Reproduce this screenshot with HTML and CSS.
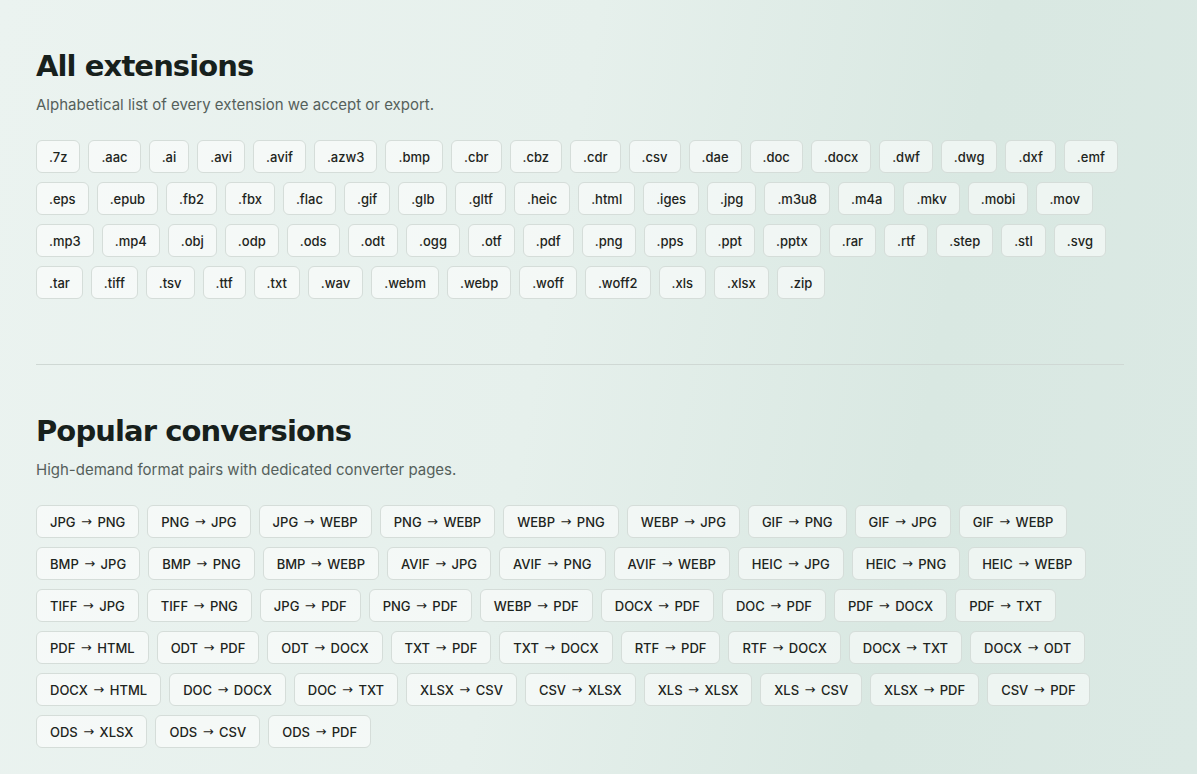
FILE: index.html
```html
<!DOCTYPE html>
<html lang="en">
<head>
    <meta charset="UTF-8">
    <meta name="viewport" content="width=device-width, initial-scale=1.0">
    <title>Formats - All extensions</title>
    <link rel="stylesheet" href="styles.css">
</head>
<body>
    <div class="page">
        <section class="section">
            <h2 class="section-title">All extensions</h2>
            <p class="section-desc">Alphabetical list of every extension we accept or export.</p>
            <div class="chip-list">
                <a class="chip">.7z</a><a class="chip">.aac</a><a class="chip">.ai</a><a class="chip">.avi</a><a class="chip">.avif</a><a class="chip">.azw3</a><a class="chip">.bmp</a><a class="chip">.cbr</a><a class="chip">.cbz</a><a class="chip">.cdr</a><a class="chip">.csv</a><a class="chip">.dae</a><a class="chip">.doc</a><a class="chip">.docx</a><a class="chip">.dwf</a><a class="chip">.dwg</a><a class="chip">.dxf</a><a class="chip">.emf</a>
                <a class="chip">.eps</a><a class="chip">.epub</a><a class="chip">.fb2</a><a class="chip">.fbx</a><a class="chip">.flac</a><a class="chip">.gif</a><a class="chip">.glb</a><a class="chip">.gltf</a><a class="chip">.heic</a><a class="chip">.html</a><a class="chip">.iges</a><a class="chip">.jpg</a><a class="chip">.m3u8</a><a class="chip">.m4a</a><a class="chip">.mkv</a><a class="chip">.mobi</a><a class="chip">.mov</a>
                <a class="chip">.mp3</a><a class="chip">.mp4</a><a class="chip">.obj</a><a class="chip">.odp</a><a class="chip">.ods</a><a class="chip">.odt</a><a class="chip">.ogg</a><a class="chip">.otf</a><a class="chip">.pdf</a><a class="chip">.png</a><a class="chip">.pps</a><a class="chip">.ppt</a><a class="chip">.pptx</a><a class="chip">.rar</a><a class="chip">.rtf</a><a class="chip">.step</a><a class="chip">.stl</a><a class="chip">.svg</a>
                <a class="chip">.tar</a><a class="chip">.tiff</a><a class="chip">.tsv</a><a class="chip">.ttf</a><a class="chip">.txt</a><a class="chip">.wav</a><a class="chip">.webm</a><a class="chip">.webp</a><a class="chip">.woff</a><a class="chip">.woff2</a><a class="chip">.xls</a><a class="chip">.xlsx</a><a class="chip">.zip</a>
            </div>
        </section>

        <hr class="divider">

        <section class="section">
            <h2 class="section-title">Popular conversions</h2>
            <p class="section-desc">High-demand format pairs with dedicated converter pages.</p>
            <div class="chip-list pair-list">
                <a class="chip">JPG <span class="arrow">→</span> PNG</a><a class="chip">PNG <span class="arrow">→</span> JPG</a><a class="chip">JPG <span class="arrow">→</span> WEBP</a><a class="chip">PNG <span class="arrow">→</span> WEBP</a><a class="chip">WEBP <span class="arrow">→</span> PNG</a><a class="chip">WEBP <span class="arrow">→</span> JPG</a><a class="chip">GIF <span class="arrow">→</span> PNG</a><a class="chip">GIF <span class="arrow">→</span> JPG</a><a class="chip">GIF <span class="arrow">→</span> WEBP</a>
                <a class="chip">BMP <span class="arrow">→</span> JPG</a><a class="chip">BMP <span class="arrow">→</span> PNG</a><a class="chip">BMP <span class="arrow">→</span> WEBP</a><a class="chip">AVIF <span class="arrow">→</span> JPG</a><a class="chip">AVIF <span class="arrow">→</span> PNG</a><a class="chip">AVIF <span class="arrow">→</span> WEBP</a><a class="chip">HEIC <span class="arrow">→</span> JPG</a><a class="chip">HEIC <span class="arrow">→</span> PNG</a><a class="chip">HEIC <span class="arrow">→</span> WEBP</a>
                <a class="chip">TIFF <span class="arrow">→</span> JPG</a><a class="chip">TIFF <span class="arrow">→</span> PNG</a><a class="chip">JPG <span class="arrow">→</span> PDF</a><a class="chip">PNG <span class="arrow">→</span> PDF</a><a class="chip">WEBP <span class="arrow">→</span> PDF</a><a class="chip">DOCX <span class="arrow">→</span> PDF</a><a class="chip">DOC <span class="arrow">→</span> PDF</a><a class="chip">PDF <span class="arrow">→</span> DOCX</a><a class="chip">PDF <span class="arrow">→</span> TXT</a>
                <a class="chip">PDF <span class="arrow">→</span> HTML</a><a class="chip">ODT <span class="arrow">→</span> PDF</a><a class="chip">ODT <span class="arrow">→</span> DOCX</a><a class="chip">TXT <span class="arrow">→</span> PDF</a><a class="chip">TXT <span class="arrow">→</span> DOCX</a><a class="chip">RTF <span class="arrow">→</span> PDF</a><a class="chip">RTF <span class="arrow">→</span> DOCX</a><a class="chip">DOCX <span class="arrow">→</span> TXT</a><a class="chip">DOCX <span class="arrow">→</span> ODT</a>
                <a class="chip">DOCX <span class="arrow">→</span> HTML</a><a class="chip">DOC <span class="arrow">→</span> DOCX</a><a class="chip">DOC <span class="arrow">→</span> TXT</a><a class="chip">XLSX <span class="arrow">→</span> CSV</a><a class="chip">CSV <span class="arrow">→</span> XLSX</a><a class="chip">XLS <span class="arrow">→</span> XLSX</a><a class="chip">XLS <span class="arrow">→</span> CSV</a><a class="chip">XLSX <span class="arrow">→</span> PDF</a><a class="chip">CSV <span class="arrow">→</span> PDF</a>
                <a class="chip">ODS <span class="arrow">→</span> XLSX</a><a class="chip">ODS <span class="arrow">→</span> CSV</a><a class="chip">ODS <span class="arrow">→</span> PDF</a>
            </div>
        </section>
    </div>
</body>
</html>
```

FILE: styles.css
```css
* {
    margin: 0;
    padding: 0;
    box-sizing: border-box;
}

body {
    font-family: Inter, 'Noto Sans', sans-serif;
    color: #1f2623;
    min-height: 100vh;
    background: linear-gradient(100deg, #ebf3f0 0%, #e6f0ec 45%, #d9e8e2 75%, #dbe9e4 100%);
}

.page {
    width: 1088px;
    margin-left: 36px;
    padding-top: 48px;
}

.section-title {
    font-family: 'DejaVu Sans', sans-serif;
    font-size: 29px;
    font-weight: 700;
    letter-spacing: -0.9px;
    color: #17201c;
    line-height: 36px;
}

.section-desc {
    margin-top: 11px;
    font-size: 15px;
    color: #55605b;
    line-height: 20px;
}

.chip-list {
    display: flex;
    flex-wrap: wrap;
    gap: 9px 8px;
    margin-top: 25px;
}

.chip {
    display: inline-flex;
    align-items: center;
    height: 33px;
    padding: 0 12px;
    font-size: 13px;
    font-weight: 500;
    color: #1d2420;
    background: rgba(255, 255, 255, 0.55);
    border: 1px solid #d5ddd9;
    border-radius: 6px;
    cursor: pointer;
    white-space: pre;
}

.pair-list .chip {
    padding: 0 13px;
}

.chip .arrow {
    font-family: 'DejaVu Sans', sans-serif;
    font-weight: 400;
    font-size: 13px;
    margin: 0 2px;
}

.divider {
    border: none;
    border-top: 1px solid #cfd8d4;
    margin: 65px 0 48px;
}
```
